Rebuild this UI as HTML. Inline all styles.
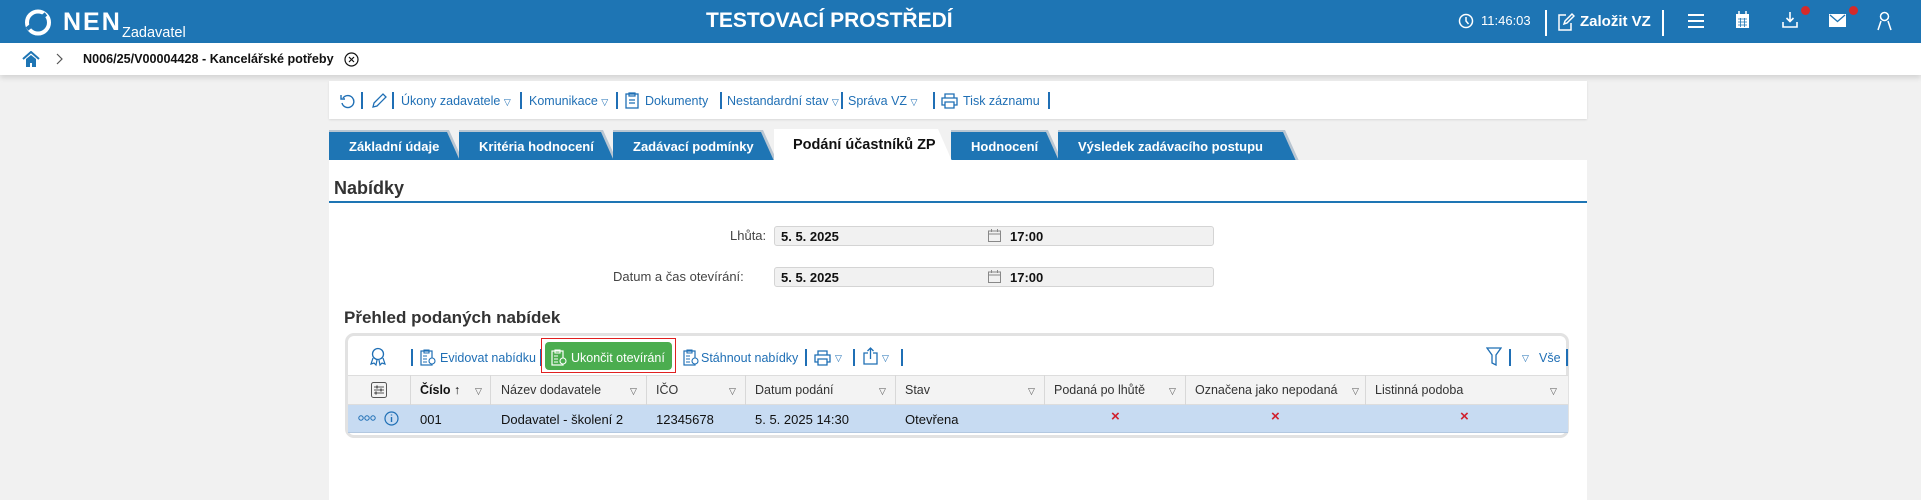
<!DOCTYPE html>
<html><head><meta charset="utf-8"><style>
*{margin:0;padding:0;box-sizing:border-box}
body{width:1921px;height:500px;overflow:hidden;background:#f1f1f1;font-family:"Liberation Sans",sans-serif;position:relative;color:#222}
.a{position:absolute;white-space:nowrap}
.hdr{left:0;top:0;width:1921px;height:43px;background:#1e75b4}
.bc{left:0;top:43px;width:1921px;height:32px;background:#fff;box-shadow:0 3px 5px rgba(0,0,0,.12)}
.w{color:#fff}
.tb{left:329px;top:81px;width:1258px;height:38px;background:#fff;box-shadow:0 1px 2px rgba(0,0,0,.1)}
.bl{color:#1f6fb5;font-size:12.5px}
.sep{width:1.5px;height:17px;background:#1f6fb5}
.tab{top:132px;height:29px;color:#fff;font-weight:bold;font-size:13px;line-height:29px;padding-left:20px}
.tab .bg{position:absolute;left:0;top:0;right:0;bottom:0;background:#1e75b4;clip-path:polygon(0 0,calc(100% - 13px) 0,100% 100%,0 100%);z-index:-1}
.tab .sh{position:absolute;left:0;top:-2px;right:-3px;bottom:0;background:#b9c6d2;clip-path:polygon(0 0,calc(100% - 14px) 0,100% 100%,0 100%);z-index:-2}
.cont{left:329px;top:160px;width:1258px;height:340px;background:#fff}
.lbl{font-size:13px;color:#444}
.fld{background:#f1f1f1;border:1px solid #d4d4d4;border-radius:3px;height:20px}
.fv{font-size:13px;font-weight:bold;color:#111}
.th{font-size:12.5px;color:#333;top:383px}
.tri{font-size:9px;color:#555}
.col{top:375px;width:1px;height:30px;background:#d8d8d8}
.td{font-size:13px;top:412px;color:#111}
.x{color:#d0202e;font-weight:bold;font-size:15px;top:408px}
</style></head><body>
<div class="a hdr"></div>
<svg class="a" style="left:24px;top:9px" width="30" height="27" viewBox="0 0 30 27"><circle cx="14" cy="13.5" r="11" fill="none" stroke="#fff" stroke-width="4"/><path d="M3 20 L22 5" stroke="#1e75b4" stroke-width="4"/></svg>
<div class="a w" style="left:63px;top:8px;font-size:25px;font-weight:bold;letter-spacing:2px">NEN</div>
<div class="a w" style="left:122px;top:25px;font-size:14.5px">Zadavatel</div>
<div class="a w" style="left:706px;top:9px;font-size:21px;font-weight:bold">TESTOVACÍ PROSTŘEDÍ</div>
<svg class="a" style="left:1458px;top:12px" width="16" height="18" viewBox="0 0 16 18"><circle cx="8" cy="9" r="6.5" fill="none" stroke="#fff" stroke-width="1.5"/><path d="M8 5v4l2.5 3" stroke="#fff" stroke-width="1.5" fill="none"/></svg>
<div class="a w" style="left:1481px;top:13px;font-size:13px">11:46:03</div>
<div class="a" style="left:1545px;top:10px;width:2px;height:26px;background:#fff"></div>
<svg class="a" style="left:1557px;top:12px" width="18" height="20" viewBox="0 0 18 20"><path d="M9 3H2v15h12v-7M7 12l1-3 7-7 2 2-7 7z" fill="none" stroke="#fff" stroke-width="1.5"/></svg>
<div class="a w" style="left:1580px;top:13px;font-size:15px;font-weight:bold">Založit VZ</div>
<div class="a" style="left:1662px;top:10px;width:2px;height:26px;background:#fff"></div>
<svg class="a" style="left:1688px;top:13px" width="16" height="16"><path d="M0 2h16M0 8h16M0 14h16" stroke="#fff" stroke-width="2"/></svg>
<svg class="a" style="left:1735px;top:11px" width="15" height="18"><rect x="1" y="3" width="13" height="14" fill="#fff"/><path d="M4 0v4M11 0v4" stroke="#fff" stroke-width="1.5"/><path d="M3 8h9M3 11h9M3 14h9M5.5 7v9M9.5 7v9" stroke="#1e75b4" stroke-width=".8"/></svg>
<svg class="a" style="left:1782px;top:11px" width="16" height="18"><path d="M8 1v9M4.5 7L8 10.5 11.5 7M1 11v5h14v-5" fill="none" stroke="#fff" stroke-width="1.6"/></svg>
<div class="a" style="left:1801px;top:6px;width:9px;height:9px;border-radius:50%;background:#d42a2a"></div>
<svg class="a" style="left:1829px;top:14px" width="17" height="13"><rect x="0" y="0" width="17" height="13" fill="#fff"/><path d="M1 1l7.5 6.5L16 1" fill="none" stroke="#1e75b4" stroke-width="1.3"/></svg>
<div class="a" style="left:1849px;top:6px;width:9px;height:9px;border-radius:50%;background:#d42a2a"></div>
<svg class="a" style="left:1877px;top:11px" width="15" height="20"><circle cx="7.5" cy="5.5" r="4" fill="none" stroke="#fff" stroke-width="1.5"/><path d="M1 19l3-9M14 19l-3-9" stroke="#fff" stroke-width="1.5"/></svg>

<div class="a bc"></div>
<svg class="a" style="left:22px;top:51px" width="18" height="16"><path d="M1 8L9 1l8 7" fill="none" stroke="#1e75b4" stroke-width="2"/><path d="M4 8v8h4v-4h2v4h4V8L9 4z" fill="#1e75b4"/></svg>
<svg class="a" style="left:56px;top:53px" width="8" height="12"><path d="M1 1l5 5-5 5" fill="none" stroke="#555" stroke-width="1.2"/></svg>
<div class="a" style="left:83px;top:52px;font-size:12.6px;font-weight:bold;color:#111">N006/25/V00004428 - Kancelářské potřeby</div>
<svg class="a" style="left:344px;top:52px" width="15" height="15"><circle cx="7.5" cy="7.5" r="6.5" fill="none" stroke="#111" stroke-width="1.2"/><path d="M5 5l5 5M10 5l-5 5" stroke="#111" stroke-width="1.2"/></svg>

<div class="a tb"></div>
<svg class="a" style="left:340px;top:93px" width="16" height="16"><path d="M3 5a6 6 0 1 1-1 5" fill="none" stroke="#1f6fb5" stroke-width="1.4"/><path d="M1 2v4h4" fill="none" stroke="#1f6fb5" stroke-width="1.4"/></svg>
<div class="a sep" style="left:361px;top:92px"></div>
<svg class="a" style="left:371px;top:92px" width="16" height="17"><path d="M2 15l1-4 9-9 3 3-9 9z" fill="none" stroke="#1f6fb5" stroke-width="1.3"/></svg>
<div class="a sep" style="left:392px;top:92px"></div>
<div class="a bl" style="left:401px;top:94px">Úkony zadavatele <span style="font-size:9px">▽</span></div>
<div class="a sep" style="left:520px;top:92px"></div>
<div class="a bl" style="left:529px;top:94px">Komunikace <span style="font-size:9px">▽</span></div>
<div class="a sep" style="left:616px;top:92px"></div>
<svg class="a" style="left:625px;top:92px" width="14" height="17"><rect x="1" y="2" width="12" height="14" fill="none" stroke="#1f6fb5" stroke-width="1.3"/><path d="M4 1h6v3H4zM4 8h6M4 11h6" fill="none" stroke="#1f6fb5" stroke-width="1.2"/></svg>
<div class="a bl" style="left:645px;top:94px">Dokumenty</div>
<div class="a sep" style="left:720px;top:92px"></div>
<div class="a bl" style="left:727px;top:94px">Nestandardní stav <span style="font-size:9px">▽</span></div>
<div class="a sep" style="left:841px;top:92px"></div>
<div class="a bl" style="left:848px;top:94px">Správa VZ <span style="font-size:9px">▽</span></div>
<div class="a sep" style="left:933px;top:92px"></div>
<svg class="a" style="left:941px;top:93px" width="17" height="16"><path d="M4 5V1h9v4M4 12H1V5h15v7h-3M4 9h9v6H4z" fill="none" stroke="#1f6fb5" stroke-width="1.3"/></svg>
<div class="a bl" style="left:963px;top:94px">Tisk záznamu</div>
<div class="a sep" style="left:1048px;top:92px"></div>

<div class="a tab" style="left:329px;width:131px"><div class="sh"></div><div class="bg"></div>Základní údaje</div>
<div class="a tab" style="left:459px;width:155px"><div class="sh"></div><div class="bg"></div>Kritéria hodnocení</div>
<div class="a tab" style="left:613px;width:161px"><div class="sh"></div><div class="bg"></div>Zadávací podmínky</div>
<div class="a tab" style="left:951px;width:108px"><div class="sh"></div><div class="bg"></div>Hodnocení</div>
<div class="a tab" style="left:1058px;width:238px"><div class="sh"></div><div class="bg"></div>Výsledek zadávacího postupu</div>
<div class="a" style="left:774px;top:129px;width:178px;height:32px;background:#fff;clip-path:polygon(0 0,calc(100% - 14px) 0,100% 100%,0 100%)"></div>
<div class="a" style="left:793px;top:137px;font-size:14.5px;font-weight:bold;color:#111">Podání účastníků ZP</div>

<div class="a cont"></div>
<div class="a" style="left:334px;top:178px;font-size:18px;font-weight:bold;color:#333">Nabídky</div>
<div class="a" style="left:329px;top:201px;width:1258px;height:2px;background:#1e75b4"></div>

<div class="a lbl" style="left:730px;top:228px">Lhůta:</div>
<div class="a fld" style="left:774px;top:226px;width:440px"></div>
<div class="a fv" style="left:781px;top:229px">5. 5. 2025</div>
<svg class="a" style="left:988px;top:229px" width="13" height="13"><rect x=".5" y="2" width="12" height="10.5" fill="none" stroke="#888"/><path d="M.5 5h12M3.5 0v3M9.5 0v3" stroke="#888"/></svg>
<div class="a fv" style="left:1010px;top:229px">17:00</div>

<div class="a lbl" style="left:613px;top:269px">Datum a čas otevírání:</div>
<div class="a fld" style="left:774px;top:267px;width:440px"></div>
<div class="a fv" style="left:781px;top:270px">5. 5. 2025</div>
<svg class="a" style="left:988px;top:270px" width="13" height="13"><rect x=".5" y="2" width="12" height="10.5" fill="none" stroke="#888"/><path d="M.5 5h12M3.5 0v3M9.5 0v3" stroke="#888"/></svg>
<div class="a fv" style="left:1010px;top:270px">17:00</div>

<div class="a" style="left:344px;top:308px;font-size:17px;font-weight:bold;color:#333">Přehled podaných nabídek</div>
<div class="a" style="left:345px;top:333px;width:1224px;height:105px;border:3px solid #e2e2e2;border-radius:9px;background:#fff"></div>

<svg class="a" style="left:369px;top:347px" width="18" height="20"><circle cx="9" cy="7" r="5.5" fill="none" stroke="#1f6fb5" stroke-width="1.3"/><path d="M4 11l-2 6 3-1 2 2 1-5M14 11l2 6-3-1-2 2-1-5" fill="none" stroke="#1f6fb5" stroke-width="1.2"/></svg>
<div class="a sep" style="left:411px;top:349px"></div>
<svg class="a" style="left:420px;top:348px" width="16" height="18"><rect x="1" y="3" width="11" height="14" fill="none" stroke="#1f6fb5" stroke-width="1.2"/><path d="M4 2h5v3H4zM3 8h4M3 11h4M3 14h4" fill="none" stroke="#1f6fb5" stroke-width="1.1"/><circle cx="12" cy="13" r="3" fill="#fff" stroke="#1f6fb5" stroke-width="1.1"/></svg>
<div class="a bl" style="left:440px;top:351px">Evidovat nabídku</div>
<div class="a sep" style="left:540px;top:349px"></div>
<div class="a" style="left:541px;top:338px;width:135px;height:35px;border:1px solid #e02020"></div>
<div class="a" style="left:545px;top:342px;width:127px;height:28px;background:#4bad4f;border-radius:4px"></div>
<svg class="a" style="left:551px;top:348px" width="16" height="18"><rect x="1" y="3" width="11" height="14" fill="none" stroke="#fff" stroke-width="1.2"/><path d="M4 2h5v3H4zM3 8h4M3 11h4M3 14h4" fill="none" stroke="#fff" stroke-width="1.1"/><circle cx="12" cy="13" r="3" fill="#4bad4f" stroke="#fff" stroke-width="1.1"/></svg>
<div class="a" style="left:571px;top:351px;font-size:12.5px;color:#fff">Ukončit otevírání</div>
<svg class="a" style="left:683px;top:348px" width="16" height="18"><rect x="1" y="3" width="11" height="14" fill="none" stroke="#1f6fb5" stroke-width="1.2"/><path d="M4 2h5v3H4zM3 8h4M3 11h4M3 14h4" fill="none" stroke="#1f6fb5" stroke-width="1.1"/><circle cx="12" cy="13" r="3" fill="#fff" stroke="#1f6fb5" stroke-width="1.1"/></svg>
<div class="a bl" style="left:701px;top:351px">Stáhnout nabídky</div>
<div class="a sep" style="left:805px;top:349px"></div>
<svg class="a" style="left:814px;top:350px" width="17" height="16"><path d="M4 5V1h9v4M4 12H1V5h15v7h-3M4 9h9v6H4z" fill="none" stroke="#1f6fb5" stroke-width="1.3"/></svg>
<div class="a bl" style="left:835px;top:353px;font-size:9px">▽</div>
<div class="a sep" style="left:853px;top:349px"></div>
<svg class="a" style="left:863px;top:347px" width="16" height="18"><path d="M5 6H1v11h13V6h-4M7.5 12V1M4.5 4l3-3 3 3" fill="none" stroke="#1f6fb5" stroke-width="1.3"/></svg>
<div class="a bl" style="left:882px;top:353px;font-size:9px">▽</div>
<div class="a sep" style="left:901px;top:349px"></div>
<svg class="a" style="left:1486px;top:347px" width="16" height="19"><path d="M1 1h14L10 8v10l-4-2V8z" fill="none" stroke="#1f6fb5" stroke-width="1.3"/></svg>
<div class="a sep" style="left:1509px;top:349px"></div>
<div class="a bl" style="left:1522px;top:353px;font-size:9px">▽</div>
<div class="a bl" style="left:1539px;top:351px">Vše</div>
<div class="a sep" style="left:1566px;top:349px"></div>

<div class="a" style="left:348px;top:375px;width:1220px;height:30px;background:#f3f3f3;border-top:1px solid #ddd;border-bottom:1px solid #ddd"></div>
<div class="a col" style="left:410px"></div><div class="a col" style="left:490px"></div><div class="a col" style="left:646px"></div><div class="a col" style="left:745px"></div><div class="a col" style="left:895px"></div><div class="a col" style="left:1044px"></div><div class="a col" style="left:1185px"></div><div class="a col" style="left:1365px"></div>
<svg class="a" style="left:371px;top:382px" width="16" height="16"><rect x=".5" y=".5" width="15" height="15" rx="2" fill="none" stroke="#555"/><path d="M3 5h10M3 8h10M3 11h10" stroke="#555"/><path d="M6 3.5v3M10 6.5v3M5 9.5v3" stroke="#555" stroke-width="1.5"/></svg>
<div class="a th" style="left:420px;font-weight:bold;color:#111">Číslo <span style="font-weight:normal">↑</span></div>
<div class="a tri" style="left:475px;top:386px">▽</div>
<div class="a th" style="left:501px">Název dodavatele</div><div class="a tri" style="left:630px;top:386px">▽</div>
<div class="a th" style="left:656px">IČO</div><div class="a tri" style="left:729px;top:386px">▽</div>
<div class="a th" style="left:755px">Datum podání</div><div class="a tri" style="left:879px;top:386px">▽</div>
<div class="a th" style="left:905px">Stav</div><div class="a tri" style="left:1028px;top:386px">▽</div>
<div class="a th" style="left:1054px">Podaná po lhůtě</div><div class="a tri" style="left:1169px;top:386px">▽</div>
<div class="a th" style="left:1195px">Označena jako nepodaná</div><div class="a tri" style="left:1352px;top:386px">▽</div>
<div class="a th" style="left:1375px">Listinná podoba</div><div class="a tri" style="left:1550px;top:386px">▽</div>

<div class="a" style="left:348px;top:405px;width:1220px;height:28px;background:#c7dbf2;border-bottom:1px solid #b3c8e0"></div>
<svg class="a" style="left:358px;top:415px" width="18" height="6"><circle cx="3" cy="3" r="2.2" fill="none" stroke="#1f6fb5"/><circle cx="9" cy="3" r="2.2" fill="none" stroke="#1f6fb5"/><circle cx="15" cy="3" r="2.2" fill="none" stroke="#1f6fb5"/></svg>
<svg class="a" style="left:384px;top:411px" width="15" height="15"><circle cx="7.5" cy="7.5" r="6.5" fill="none" stroke="#1f6fb5" stroke-width="1.2"/><path d="M7.5 6v5M7.5 3.5v1" stroke="#1f6fb5" stroke-width="1.4"/></svg>
<div class="a td" style="left:420px">001</div>
<div class="a td" style="left:501px">Dodavatel - školení 2</div>
<div class="a td" style="left:656px">12345678</div>
<div class="a td" style="left:755px">5. 5. 2025 14:30</div>
<div class="a td" style="left:905px">Otevřena</div>
<div class="a x" style="left:1111px">×</div>
<div class="a x" style="left:1271px">×</div>
<div class="a x" style="left:1460px">×</div>
</body></html>
